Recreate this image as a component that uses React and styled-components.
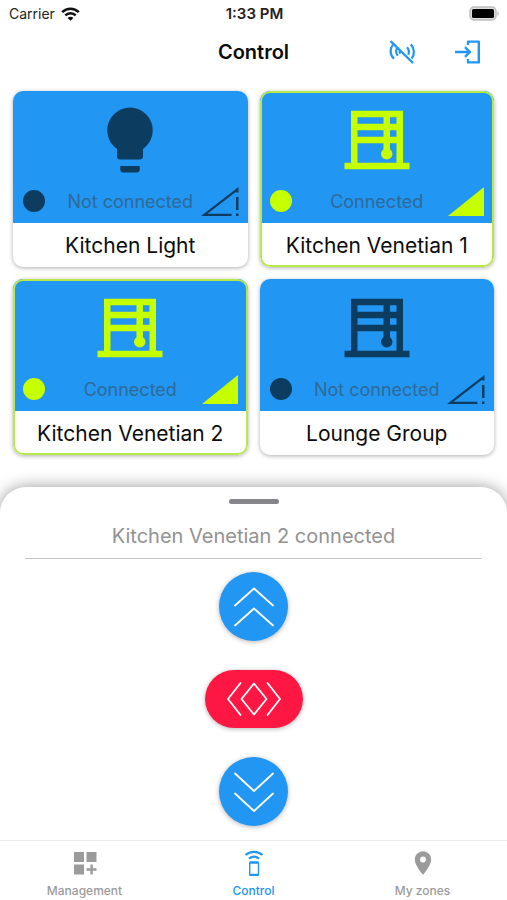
import React, { useState } from 'react';
import styled, { createGlobalStyle } from 'styled-components';

const BLUE = '#2196f3';
const LIME = '#c6ff00';
const NAVY = '#0d3c61';
const GREY = '#9b9b9b';

const GlobalStyle = createGlobalStyle`
  * {
    box-sizing: border-box;
  }

  body {
    margin: 0;
    background: #fff;
    color: #0c0c0c;
    font-family: Inter, "Liberation Sans", sans-serif;
  }

  button {
    font: inherit;
    border: none;
    padding: 0;
    cursor: pointer;
  }

  svg {
    display: block;
  }
`;

const Screen = styled.div`
  display: flex;
  flex-direction: column;
  min-height: 100vh;
`;

const StatusBar = styled.div`
  display: grid;
  grid-template-columns: 1fr auto 1fr;
  align-items: center;
  height: 27px;
  padding: 0 7px 0 9px;
  font-size: 14px;
  color: #222;
`;

const Carrier = styled.span`
  display: flex;
  align-items: center;
  gap: 6px;
`;

const Time = styled.span`
  font-size: 15px;
  font-weight: 600;
`;

const Battery = styled.span`
  justify-self: end;
`;

const Header = styled.header`
  display: grid;
  grid-template-columns: 1fr auto 1fr;
  align-items: center;
  height: 50px;
  padding: 0 25px;
`;

const Title = styled.h1`
  grid-column: 2;
  margin: 0;
  font-size: 20px;
  font-weight: 600;
`;

const Actions = styled.div`
  display: flex;
  justify-content: flex-end;
  gap: 38px;
`;

const IconButton = styled.button`
  background: transparent;
  color: ${BLUE};
`;

const Grid = styled.main`
  display: grid;
  grid-template-columns: 1fr 1fr;
  gap: 12px;
  padding: 14px 13px 32px;
`;

const Card = styled.button`
  position: relative;
  display: flex;
  flex-direction: column;
  overflow: hidden;
  border-radius: 10px;
  background: #fff;
  color: inherit;
  box-shadow: 0 1px 4px rgba(0, 0, 0, 0.32);

  &::after {
    content: "";
    position: absolute;
    inset: 0;
    border-radius: 10px;
    border: ${p => (p.$on ? `2px solid #b9e84a` : 'none')};
  }
`;

const CardTop = styled.span`
  display: flex;
  flex-direction: column;
  align-items: center;
  justify-content: space-between;
  width: 100%;
  height: 132px;
  padding: 10px 9px 7px;
  background: ${BLUE};
  color: ${p => (p.$on ? LIME : NAVY)};
`;

const CardStatus = styled.span`
  display: grid;
  grid-template-columns: 38px 1fr 38px;
  align-items: center;
  width: 100%;
`;

const Dot = styled.span`
  width: 22px;
  height: 22px;
  margin-left: 1px;
  border-radius: 50%;
  background: currentColor;
`;

const StatusText = styled.span`
  padding-top: 2px;
  font-size: 18px;
  line-height: 28px;
  white-space: nowrap;
  text-align: center;
  color: #2f6a98;
`;

const CardName = styled.span`
  width: 100%;
  padding-top: 1px;
  font-size: 21px;
  line-height: 43px;
  text-align: center;
  white-space: nowrap;
`;

const Sheet = styled.section`
  flex: 1;
  display: flex;
  flex-direction: column;
  align-items: center;
  padding: 12px 25px 14px;
  border-radius: 26px 26px 0 0;
  background: #fff;
  box-shadow: 0 0 16px rgba(0, 0, 0, 0.4);
`;

const Handle = styled.div`
  width: 50px;
  height: 5px;
  border-radius: 3px;
  background: #85858a;
`;

const SheetTitle = styled.p`
  align-self: stretch;
  margin: 10px 0 13px;
  border-bottom: 1px solid #c4c4c4;
  text-align: center;
  font-size: 20px;
  line-height: 44px;
  color: #929292;
`;

const Controls = styled.div`
  display: flex;
  flex-direction: column;
  align-items: center;
  gap: 29px;
`;

const RoundButton = styled.button`
  display: grid;
  place-items: center;
  width: 69px;
  height: 69px;
  border-radius: 50%;
  background: ${BLUE};
  color: #fff;
  box-shadow: 0 1px 5px rgba(0, 0, 0, 0.3);
`;

const StopButton = styled(RoundButton)`
  width: 98px;
  height: 58px;
  border-radius: 29px;
  background: #ff1744;
`;

const TabBar = styled.nav`
  position: relative;
  display: grid;
  grid-template-columns: repeat(3, 1fr);
  height: 60px;
  border-top: 1px solid #ececec;
  background: #fff;
`;

const Tab = styled.a`
  display: flex;
  flex-direction: column;
  align-items: center;
  gap: 6px;
  padding-top: 8px;
  font-size: 12px;
  font-weight: 500;
  line-height: 16px;
  text-decoration: none;
  color: ${p => (p.$active ? BLUE : GREY)};
`;

const WifiIcon = () => (
  <svg width="19" height="14" viewBox="0 0 19 14" fill="none" stroke="#111" strokeWidth="2.6">
    <path d="M1.2 5.2C5.8.6 13.2.6 17.8 5.2" />
    <path d="M4.3 8.4c2.9-2.9 7.5-2.9 10.4 0" />
    <path d="M9.5 13.8 6.6 10.9c1.6-1.5 4.2-1.5 5.8 0z" fill="#111" stroke="none" />
  </svg>
);

const BatteryIcon = () => (
  <svg width="31" height="15" viewBox="0 0 31 15">
    <rect x="1" y="1" width="26" height="13" rx="4" fill="#ddd" stroke="#bdbdbd" strokeWidth="1.4" />
    <rect x="3" y="3" width="22" height="9" rx="1.6" fill="#000" />
    <path d="M28.5 5.2c1.6.6 1.6 4 0 4.6z" fill="#b5b5b5" />
  </svg>
);

const SensorsOffIcon = () => (
  <svg width="28" height="28" viewBox="0 0 28 28" fill="none" stroke="currentColor" strokeWidth="2.2">
    <path d="M2.5 3 25 25" strokeWidth="2.4" />
    <path d="M5 6.600C1.600 10.600 1.700 16.600 6 20.800" />
    <path d="M9 10.400c-1.300 2.300-1 5.200.9 7.400" />
    <path d="M22.800 6.200c4 4.400 4 10.200.8 14.400" />
    <path d="M19 9.200c2 2.200 2.300 5 1.200 7.600" />
    <path d="M12 12.300c-.7 1.200-.5 2.400.3 3.400" />
  </svg>
);

const LoginIcon = () => (
  <svg width="28" height="28" viewBox="0 0 28 28" fill="none" stroke="currentColor" strokeWidth="2.4">
    <path d="M14 7V3.600h10.800v20.800H14V21" strokeLinejoin="round" />
    <path d="M1 14h14.500M11 9.200l4.800 4.800-4.800 4.800" />
  </svg>
);

const BulbIcon = () => (
  <svg width="78" height="78" viewBox="0 0 24 24" fill="currentColor">
    <path d="M12 2a7 7 0 0 0-7 7c0 2.380 1.190 4.470 3 5.740V17a1 1 0 0 0 1 1h6a1 1 0 0 0 1-1v-2.260c1.810-1.270 3-3.360 3-5.740a7 7 0 0 0-7-7M9 21a1 1 0 0 0 1 1h4a1 1 0 0 0 1-1v-1H9z" />
  </svg>
);

const BlindsIcon = () => (
  <svg width="78" height="78" viewBox="0 0 24 24" fill="currentColor">
    <path d="M20 19V3H4v16H2v2h20v-2zM16 9h2v2h-2zm-2 2H6V9h8zm4-4h-2V5h2zm-4-2v2H6V5zM6 19v-6h8v1.820c-.45.32-.75.84-.75 1.430 0 .97.78 1.750 1.750 1.750s1.750-.78 1.750-1.750c0-.6-.3-1.120-.75-1.430V13h2v6z" />
  </svg>
);

const SignalIcon = ({ on }) => (
  <svg width="38" height="30" viewBox="0 0 38 30" fill="currentColor">
    {on ? (
      <path d="M1 30 37 1v29z" />
    ) : (
      <path d="M0 30 37.500 1v5.500H35V5.700L6.500 27.800h24V30zM35 11h2.500v13H35zM35 27.500h2.500V30H35z" />
    )}
  </svg>
);

const ChevronsUp = () => (
  <svg width="42" height="42" viewBox="0 0 42 42" fill="none" stroke="currentColor" strokeWidth="1.8" strokeLinecap="round" strokeLinejoin="round">
    <path d="M2 19.500 21 2.500l19 17M2 39.500l19-17 19 17" />
  </svg>
);

const ChevronsDown = () => (
  <svg width="42" height="42" viewBox="0 0 42 42" fill="none" stroke="currentColor" strokeWidth="1.8" strokeLinecap="round" strokeLinejoin="round">
    <path d="M2 2.500 21 20l19-17.500M2 22.500 21 40l19-17.500" />
  </svg>
);

const StopIcon = () => (
  <svg width="54" height="34" viewBox="0 0 54 34" fill="none" stroke="currentColor" strokeWidth="1.8" strokeLinecap="round" strokeLinejoin="round">
    <path d="M13.500 1 1 17l12.500 16M27 1.500 14.500 17 27 32.500 39.500 17zM40.500 1 53 17 40.500 33" />
  </svg>
);

const WidgetsIcon = () => (
  <svg width="28" height="28" viewBox="0 0 28 28" fill="currentColor">
    <path d="M3 3h10v10H3zM15.500 3h10v10h-10zM3 15.500h10v10H3zM19.400 15.500h2.400v3.800h3.700v2.400h-3.700v3.800h-2.400v-3.800h-3.900v-2.400h3.900z" />
  </svg>
);

const RemoteIcon = () => (
  <svg width="28" height="28" viewBox="0 0 28 28" fill="none" stroke="currentColor">
    <path d="M5.500 6c4.800-4.300 12.200-4.300 17 0M9 9.600c3-2.500 7-2.500 10 0" strokeWidth="2.2" />
    <rect x="9.700" y="13" width="8.800" height="13.400" rx="1" strokeWidth="1.4" />
    <path d="M9.700 13.700h8.800M9.700 25.700h8.800" strokeWidth="2" />
  </svg>
);

const PinIcon = () => (
  <svg width="28" height="28" viewBox="0 0 24 24" fill="currentColor">
    <path d="M12 2C8.130 2 5 5.130 5 9c0 5.250 7 13 7 13s7-7.750 7-13c0-3.870-3.130-7-7-7m0 9.500a2.500 2.500 0 0 1 0-5 2.500 2.500 0 0 1 0 5" />
  </svg>
);

const devices = [
  { name: 'Kitchen Light', icon: BulbIcon, on: false },
  { name: 'Kitchen Venetian 1', icon: BlindsIcon, on: true },
  { name: 'Kitchen Venetian 2', icon: BlindsIcon, on: true },
  { name: 'Lounge Group', icon: BlindsIcon, on: false },
];

const tabs = [
  { label: 'Management', icon: WidgetsIcon },
  { label: 'Control', icon: RemoteIcon },
  { label: 'My zones', icon: PinIcon },
];

const Device = ({ device, onSelect }) => {
  const Icon = device.icon;
  return (
    <Card $on={device.on} onClick={onSelect}>
      <CardTop $on={device.on}>
        <Icon />
        <CardStatus>
          <Dot />
          <StatusText>{device.on ? 'Connected' : 'Not connected'}</StatusText>
          <SignalIcon on={device.on} />
        </CardStatus>
      </CardTop>
      <CardName>{device.name}</CardName>
    </Card>
  );
};

const App = () => {
  const [selected, setSelected] = useState(devices[2]);
  const [tab, setTab] = useState('Control');

  return (
    <Screen>
      <GlobalStyle />
      <StatusBar>
        <Carrier>Carrier <WifiIcon /></Carrier>
        <Time>1:33 PM</Time>
        <Battery><BatteryIcon /></Battery>
      </StatusBar>

      <Header>
        <Title>Control</Title>
        <Actions>
          <IconButton aria-label="Disconnect"><SensorsOffIcon /></IconButton>
          <IconButton aria-label="Log in"><LoginIcon /></IconButton>
        </Actions>
      </Header>

      <Grid>
        {devices.map(d => (
          <Device key={d.name} device={d} onSelect={() => setSelected(d)} />
        ))}
      </Grid>

      <Sheet>
        <Handle />
        <SheetTitle>{selected.name} {selected.on ? 'connected' : 'not connected'}</SheetTitle>
        <Controls>
          <RoundButton aria-label="Up"><ChevronsUp /></RoundButton>
          <StopButton aria-label="Stop"><StopIcon /></StopButton>
          <RoundButton aria-label="Down"><ChevronsDown /></RoundButton>
        </Controls>
      </Sheet>

      <TabBar>
        {tabs.map(({ label, icon: Icon }) => (
          <Tab key={label} href="#" $active={tab === label} onClick={() => setTab(label)}>
            <Icon />
            {label}
          </Tab>
        ))}
      </TabBar>
    </Screen>
  );
};

export default App;
